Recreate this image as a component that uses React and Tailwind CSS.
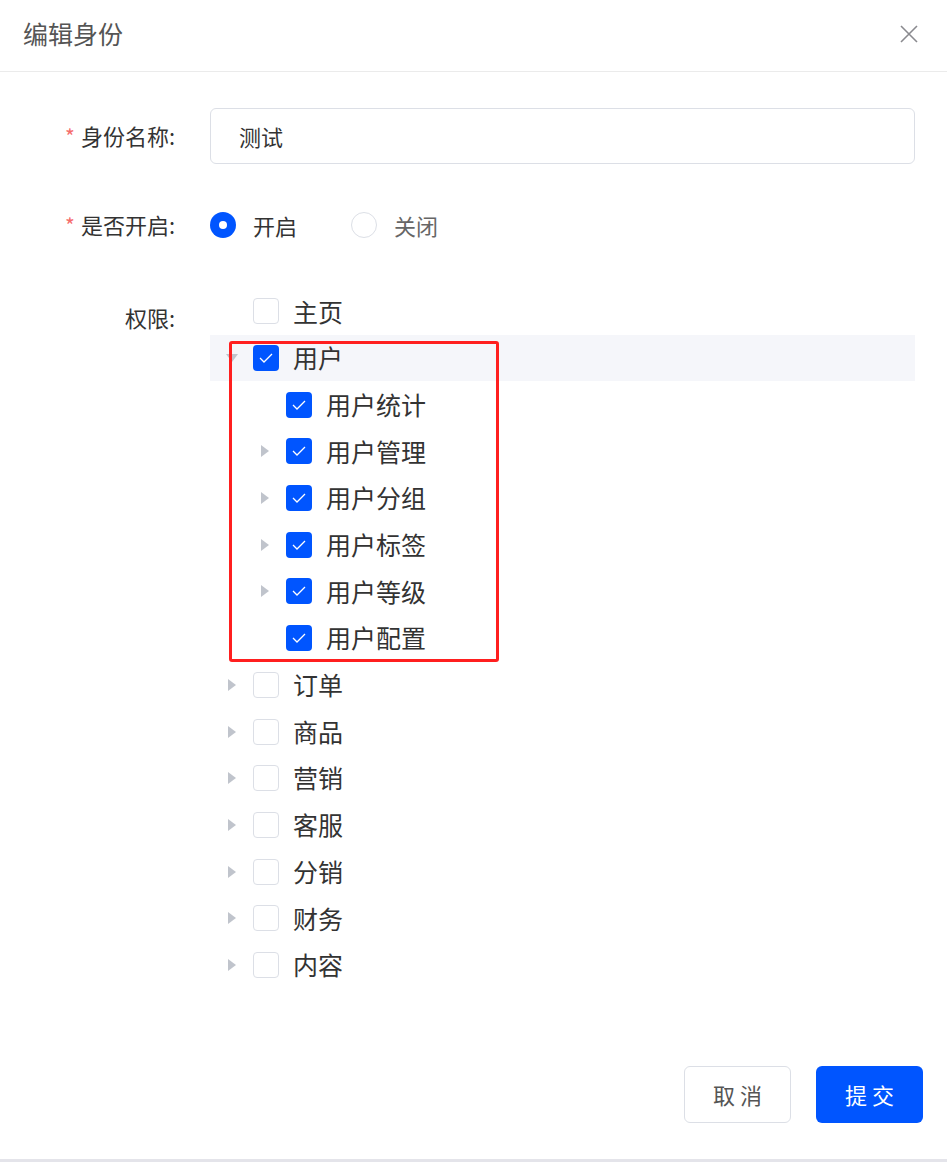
import React from 'react';

const tree = [
  { label: '主页', level: 0, arrow: false, checked: false },
  { label: '用户', level: 0, arrow: 'down', checked: true, active: true },
  { label: '用户统计', level: 1, arrow: false, checked: true },
  { label: '用户管理', level: 1, arrow: 'right', checked: true },
  { label: '用户分组', level: 1, arrow: 'right', checked: true },
  { label: '用户标签', level: 1, arrow: 'right', checked: true },
  { label: '用户等级', level: 1, arrow: 'right', checked: true },
  { label: '用户配置', level: 1, arrow: false, checked: true },
  { label: '订单', level: 0, arrow: 'right', checked: false },
  { label: '商品', level: 0, arrow: 'right', checked: false },
  { label: '营销', level: 0, arrow: 'right', checked: false },
  { label: '客服', level: 0, arrow: 'right', checked: false },
  { label: '分销', level: 0, arrow: 'right', checked: false },
  { label: '财务', level: 0, arrow: 'right', checked: false },
  { label: '内容', level: 0, arrow: 'right', checked: false },
];

const Arrow = ({ dir }) => {
  if (!dir) return null;
  if (dir === 'down') {
    return (
      <svg width="12" height="8" viewBox="0 0 12 8">
        <polygon points="0,0 12,0 6,8" fill="#c0c4cc" />
      </svg>
    );
  }
  return (
    <svg width="8" height="12" viewBox="0 0 8 12">
      <polygon points="0,0 8,6 0,12" fill="#c0c4cc" />
    </svg>
  );
};

const Checkbox = ({ checked }) =>
  checked ? (
    <span className="w-[26px] h-[26px] rounded-[4px] bg-[#0055ff] flex items-center justify-center">
      <svg width="16" height="12" viewBox="0 0 16 12">
        <polyline points="2,6 6,10 14,2" fill="none" stroke="#fff" strokeWidth="1.3" />
      </svg>
    </span>
  ) : (
    <span className="block w-[26px] h-[26px] rounded-[4px] border border-[#dcdfe6] bg-white" />
  );

const Label = ({ children, required }) => (
  <div className="w-[178px] text-right text-[22px] text-[#333] pr-[3px]">
    {required && <span className="text-[#f56c6c] text-[21px] mr-[6px]">*</span>}
    {children}
  </div>
);

export default function App() {
  return (
    <div
      className="w-[947px] h-[1162px] bg-white flex flex-col border-b-[3px] border-[#e4e4ea]"
      style={{ fontFamily: '"Noto Sans CJK SC", "Noto Sans", sans-serif' }}
    >
      <div className="h-[72px] shrink-0 border-b border-[#ebebeb] flex items-center justify-between pl-[23px] pr-[29px] pb-[4px]">
        <span className="text-[25px] text-[#555]">编辑身份</span>
        <svg width="18" height="18" viewBox="0 0 18 18">
          <path d="M1 1L17 17M17 1L1 17" stroke="#8a8a8f" strokeWidth="1.6" />
        </svg>
      </div>

      <div className="pt-[36px] pr-[32px]">
        <div className="flex items-center">
          <Label required>身份名称:</Label>
          <div className="ml-[32px] flex-1 h-[56px] border border-[#dcdfe6] rounded-[6px] flex items-center pl-[28px] text-[22px] text-[#333]">
            测试
          </div>
        </div>

        <div className="flex items-center mt-[41px] h-[40px]">
          <Label required>是否开启:</Label>
          <div className="ml-[32px] flex items-center">
            <span className="w-[26px] h-[26px] rounded-full bg-[#0055ff] flex items-center justify-center">
              <span className="w-[8px] h-[8px] rounded-full bg-white" />
            </span>
            <span className="ml-[17px] text-[22px] text-[#333]">开启</span>
            <span className="ml-[54px] w-[26px] h-[26px] rounded-full border border-[#dcdfe6]" />
            <span className="ml-[17px] text-[22px] text-[#666]">关闭</span>
          </div>
        </div>

        <div className="flex items-start mt-[43px]">
          <div className="pt-[13px]">
            <Label>权限:</Label>
          </div>
          <div className="ml-[32px] flex-1 relative">
            {tree.map((n) => (
              <div
                key={n.label}
                className={`h-[46.7px] flex items-center ${n.active ? 'bg-[#f5f6fa]' : ''} ${n.level ? 'pl-[41px]' : 'pl-[8px]'}`}
              >
                <span className="w-[28px] flex items-center justify-center">
                  <Arrow dir={n.arrow} />
                </span>
                <span className="ml-[7px] flex">
                  <Checkbox checked={n.checked} />
                </span>
                <span className="ml-[14px] text-[25px] text-[#333]">{n.label}</span>
              </div>
            ))}
            <div className="absolute left-[19px] top-[53px] w-[270px] h-[321px] border-[3px] border-[#ff1f1f] rounded-[3px]" />
          </div>
        </div>
      </div>

      <div className="mt-auto flex justify-end gap-[25px] pr-[24px] pb-[36px]">
        <button className="w-[107px] h-[57px] rounded-[6px] border border-[#dcdfe6] bg-white text-[22px] text-[#555] tracking-[5px] pl-[5px]">
          取消
        </button>
        <button className="w-[107px] h-[57px] rounded-[6px] bg-[#0055ff] text-[22px] text-white tracking-[5px] pl-[5px]">
          提交
        </button>
      </div>
    </div>
  );
}
